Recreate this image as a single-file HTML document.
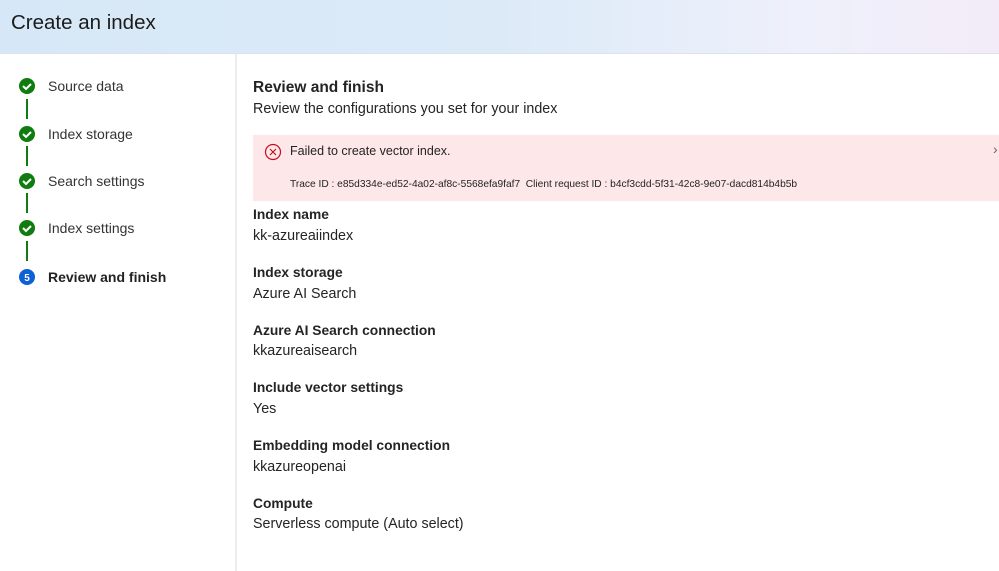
<!DOCTYPE html>
<html><head><style>
body{margin:0;width:999px;height:571px;overflow:hidden;font-family:"Segoe UI","Liberation Sans",sans-serif;color:#242424;background:#fff;position:relative}
.hdr{position:absolute;left:0;top:0;width:999px;height:53px;background:linear-gradient(90deg,#d6e8f7 0%,#dceaf8 50%,#eef0fb 80%,#f3ecf8 100%);border-bottom:1px solid #dde3ea}
.hdr h1{margin:0;position:absolute;left:11px;top:11px;font-size:20.5px;font-weight:400;color:#1b1b1b}
.side{position:absolute;left:0;top:54px;width:235px;height:517px;border-right:2px solid #ececec}
.step{position:absolute;left:48px;font-size:14px;color:#333}
.t{position:absolute;left:253px;font-size:14.3px;white-space:nowrap}
.b{font-weight:600;color:#242424;font-size:13.8px}
.err{position:absolute;left:253px;top:135px;width:746px;height:66px;background:#fde7e9}
</style></head><body>
<div class="hdr"><h1>Create an index</h1></div>
<div class="side"></div>
<svg style="position:absolute;left:0;top:0" width="60" height="300">
<g fill="#107c10">
<circle cx="27" cy="86" r="8"/><circle cx="27" cy="134" r="8"/><circle cx="27" cy="181" r="8"/><circle cx="27" cy="228" r="8"/>
<rect x="26" y="99" width="2" height="20"/><rect x="26" y="146" width="2" height="20"/><rect x="26" y="193" width="2" height="20"/><rect x="26" y="241" width="2" height="20"/>
</g>
<g stroke="#fff" stroke-width="2" fill="none"><path d="M23 86l3 3 5-5"/><path d="M23 134l3 3 5-5"/><path d="M23 181l3 3 5-5"/><path d="M23 228l3 3 5-5"/></g>
<circle cx="27" cy="277" r="8" fill="#0f5fd6"/>
<text x="27" y="281" font-size="10" fill="#fff" text-anchor="middle" font-family="Liberation Sans" font-weight="bold">5</text>
</svg>
<div class="step" style="top:78px">Source data</div>
<div class="step" style="top:126px">Index storage</div>
<div class="step" style="top:173px">Search settings</div>
<div class="step" style="top:220px">Index settings</div>
<div class="step" style="top:269px;font-weight:600;color:#222">Review and finish</div>

<div class="t b" style="top:79px;font-size:15.5px">Review and finish</div>
<div class="t" style="top:101px">Review the configurations you set for your index</div>
<div class="err">
<svg style="position:absolute;left:11px;top:8px" width="18" height="18"><circle cx="9" cy="9" r="7.5" fill="none" stroke="#c50f1f" stroke-width="1.2"/><path d="M6 6l6 6M12 6l-6 6" stroke="#c50f1f" stroke-width="1.2"/></svg>
<div style="position:absolute;left:37px;top:9px;font-size:12.5px">Failed to create vector index.</div>
<div style="position:absolute;left:37px;top:44px;font-size:10.2px">Trace ID : e85d334e-ed52-4a02-af8c-5568efa9faf7&nbsp; Client request ID : b4cf3cdd-5f31-42c8-9e07-dacd814b4b5b</div>
<div style="position:absolute;left:740px;top:6px;font-size:14px;color:#666">›</div>
</div>
<div class="t b" style="top:207px">Index name</div><div class="t" style="top:228px">kk-azureaiindex</div>
<div class="t b" style="top:265px">Index storage</div><div class="t" style="top:286px">Azure AI Search</div>
<div class="t b" style="top:323px">Azure AI Search connection</div><div class="t" style="top:343px">kkazureaisearch</div>
<div class="t b" style="top:380px">Include vector settings</div><div class="t" style="top:401px">Yes</div>
<div class="t b" style="top:438px">Embedding model connection</div><div class="t" style="top:459px">kkazureopenai</div>
<div class="t b" style="top:496px">Compute</div><div class="t" style="top:516px">Serverless compute (Auto select)</div>
</body></html>
